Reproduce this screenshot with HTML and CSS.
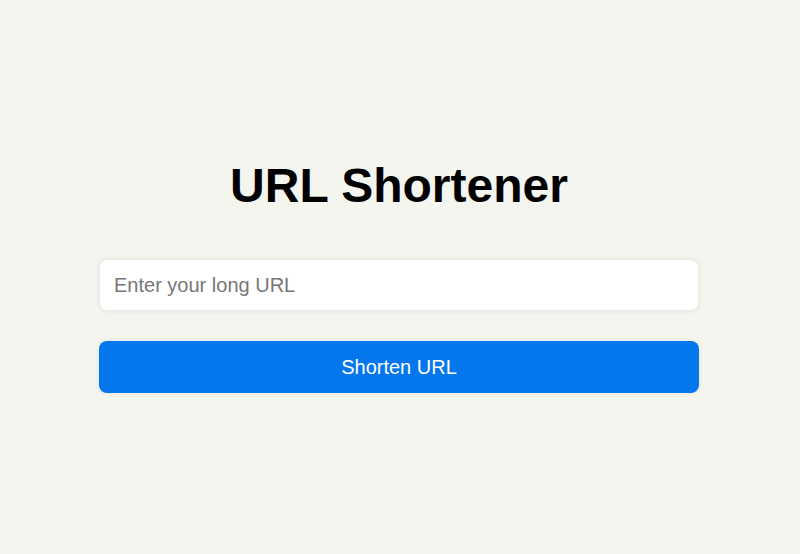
FILE: index.html
```html
<!DOCTYPE html>
<html lang="en">
<head>
<meta charset="utf-8">
<title>URL Shortener</title>
<link rel="stylesheet" href="styles.css">
</head>
<body>
<main class="page">
  <div class="card">
    <h1 class="title">URL Shortener</h1>
    <input class="url-input" type="text" placeholder="Enter your long URL">
    <button class="btn" type="button">Shorten URL</button>
  </div>
</main>
</body>
</html>
```

FILE: styles.css
```css
html, body {
  margin: 0;
  padding: 0;
  height: 100%;
}
body {
  background: #f5f5ef;
  font-family: "Liberation Sans", Arial, sans-serif;
}
.page {
  box-sizing: border-box;
  height: 100%;
  padding-right: 2px;
  display: flex;
  align-items: center;
  justify-content: center;
}
.card {
  width: 600px;
  display: flex;
  flex-direction: column;
  align-items: stretch;
}
.title {
  margin: 0 0 49px;
  font-size: 48px;
  font-weight: bold;
  text-align: center;
  color: #000;
  line-height: 49px;
}
.url-input {
  box-sizing: border-box;
  height: 52px;
  padding: 0 14px;
  font-family: inherit;
  font-size: 20px;
  color: #333;
  background: #fff;
  border: 1px solid #ebebe6;
  border-radius: 8px;
  box-shadow: 0 0 5px rgba(0, 0, 0, 0.08);
  outline: none;
}
.url-input::placeholder {
  color: #777;
}
.btn {
  margin-top: 30px;
  height: 52px;
  font-family: inherit;
  font-size: 20px;
  color: #fff;
  background: #0477ed;
  border: none;
  border-radius: 8px;
  box-shadow: 0 0 5px rgba(0, 0, 0, 0.08);
  cursor: pointer;
}
```
